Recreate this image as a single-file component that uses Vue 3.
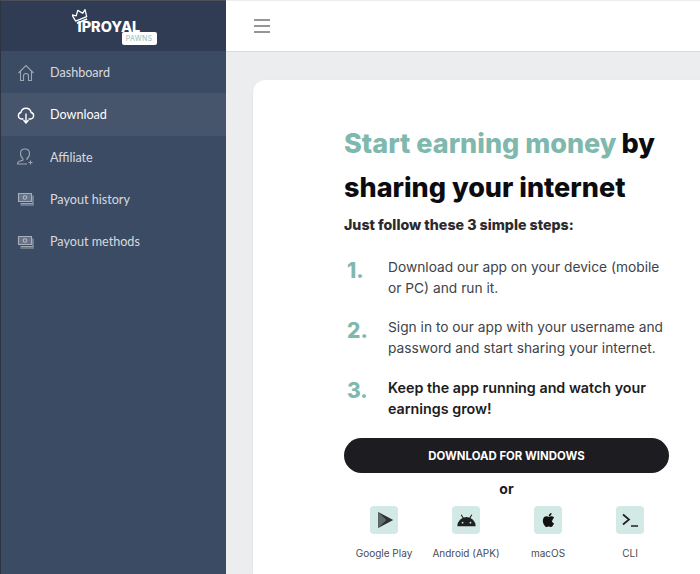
<script setup>
const menu = [
  { label: 'Dashboard', icon: 'home' },
  { label: 'Download', icon: 'cloud', active: true },
  { label: 'Affiliate', icon: 'user' },
  { label: 'Payout history', icon: 'cash' },
  { label: 'Payout methods', icon: 'cash' },
]
const steps = [
  { text: 'Download our app on your device (mobile or PC) and run it.' },
  { text: 'Sign in to our app with your username and password and start sharing your internet.' },
  { text: 'Keep the app running and watch your earnings grow!', bold: true },
]
const platforms = ['Google Play', 'Android (APK)', 'macOS', 'CLI']
</script>

<template>
  <div class="layout">
    <aside class="sidebar">
      <div class="brand">
        <div class="logo">
          <svg class="crown" viewBox="0 0 16 16" width="16" height="16">
            <g fill="none" stroke="#fff" stroke-width="1.3" stroke-linejoin="round" transform="rotate(-22 8 8)">
              <path d="M2 11L1 4l3.500 2.500L8 2l3.500 4.500L15 4l-1 7z" />
              <path d="M2.500 13.500h11" stroke-width="1.600" />
            </g>
          </svg>
          <span class="logo-text">IPROYAL</span>
          <span class="logo-tag">PAWNS</span>
        </div>
      </div>
      <nav class="nav">
        <a v-for="item in menu" :key="item.label" class="nav-item" :class="{ active: item.active }">
          <svg class="nav-icon" viewBox="0 0 18 18" width="18" height="18" fill="none" stroke="currentColor" stroke-width="1.100">
            <template v-if="item.icon === 'home'">
              <path d="M1.500 9L9 1.500 16.500 9" />
              <path d="M3.500 7.500V16.500H6.500V12a2.500 2.500 0 0 1 5 0v4.500h3V7.500" />
            </template>
            <template v-else-if="item.icon === 'cloud'">
              <path d="M6.500 13H4.500a3.300 3.300 0 0 1-.6-6.500 5.200 5.200 0 0 1 10.200 0 3.300 3.300 0 0 1-.6 6.500h-2" stroke-width="1.400" />
              <path d="M9 7.500v9M6.500 14L9 17l2.500-3" stroke-width="1.400" />
            </template>
            <template v-else-if="item.icon === 'user'">
              <path d="M6 10.500C4.300 9.500 3.500 7.500 3.500 5.500c0-2.700 2-4.500 4.500-4.500s4.500 1.800 4.500 4.500c0 2-.8 4-2.500 5v1.500" />
              <path d="M6 10.500V12L2 13.500c-1 .4-1.500 1-1.500 2.500H10" />
              <path d="M13.500 12.500v4M11.500 14.500h4" />
            </template>
            <template v-else>
              <path d="M1.500 3.500h13v8h-13z" fill="rgba(255,255,255,0.22)" />
              <circle cx="8" cy="7.500" r="1.800" />
              <path d="M3.500 13.500h12.500V5.500M3.500 15h13.500" />
            </template>
          </svg>
          <span>{{ item.label }}</span>
        </a>
      </nav>
    </aside>

    <div class="main">
      <header class="topbar">
        <button class="burger" aria-label="Menu"><i></i><i></i><i></i></button>
      </header>
      <div class="content">
        <section class="card">
          <div class="inner">
            <h1>
              <span class="h-line"><span class="accent">Start earning money</span><span class="by">by</span></span>
              <span class="h-line">sharing your internet</span>
            </h1>
            <p class="lead">Just follow these 3 simple steps:</p>
            <ol class="steps">
              <li v-for="(step, i) in steps" :key="i">
                <span class="num">{{ i + 1 }}.</span>
                <span class="step-text" :class="{ strong: step.bold }">{{ step.text }}</span>
              </li>
            </ol>
            <button class="download">DOWNLOAD FOR WINDOWS</button>
            <div class="or">or</div>
            <div class="platforms">
              <div v-for="(name, i) in platforms" :key="name" class="platform">
                <span class="tile">
                  <svg v-if="i === 0" viewBox="0 0 24 24" width="20" height="20">
                    <path d="M5 2.500L23 12 5 21.500z" fill="#2e3131" />
                    <path d="M5 2.500L15 12 5 21.500z" fill="#5f6b69" />
                  </svg>
                  <svg v-else-if="i === 1" viewBox="0 0 24 24" width="21" height="21">
                    <path d="M1.500 18.500a10.500 10.500 0 0 1 21 0z" fill="#1f2020" />
                    <path d="M6 5.500l3 5M18 5.500l-3 5" stroke="#1f2020" stroke-width="1.200" />
                    <circle cx="7.500" cy="14.500" r="1" fill="#d3e9e5" />
                    <circle cx="16.500" cy="14.500" r="1" fill="#d3e9e5" />
                  </svg>
                  <svg v-else-if="i === 2" viewBox="0 0 24 24" width="20" height="20">
                    <path d="M17.500 12.600c0-2.200 1.800-3.200 1.900-3.300-1-1.500-2.600-1.700-3.200-1.700-1.300-.1-2.600.8-3.300.8s-1.700-.8-2.800-.8C8.600 7.600 7.200 8.500 6.500 9.800c-1.500 2.600-.4 6.500 1.100 8.600.7 1 1.500 2.200 2.600 2.100 1-.04 1.400-.7 2.700-.7s1.600.7 2.700.6c1.100 0 1.800-1 2.500-2 .8-1.200 1.100-2.300 1.100-2.400-.02 0-2.700-1-2.700-3.400zM15.400 6.300c.6-.7 1-1.700.9-2.700-.8 0-1.900.6-2.500 1.300-.5.6-1 1.600-.9 2.600 1 .1 1.900-.5 2.500-1.200z" fill="#111" />
                  </svg>
                  <svg v-else viewBox="0 0 24 24" width="24" height="24" fill="none" stroke="#1f2020" stroke-width="1.700">
                    <path d="M5 6.500l6 5-6 5M13 18h7" />
                  </svg>
                </span>
                <span class="platform-name">{{ name }}</span>
              </div>
            </div>
          </div>
        </section>
      </div>
    </div>
  </div>
</template>

<style>
html, body { margin: 0; height: 100%; overflow: hidden; }
</style>

<style scoped>
.layout {
  display: flex;
  width: 700px;
  height: 574px;
  overflow: hidden;
  background: #ebedef;
  font-family: 'Inter', 'Liberation Sans', sans-serif;
}

.sidebar {
  width: 226px;
  flex: none;
  background: #3c4b64;
  border-top: 1px solid #4a4f58;
  border-left: 1px solid #2c3444;
  box-sizing: border-box;
  color: rgba(255, 255, 255, 0.8);
  font-family: 'Lato', sans-serif;
}

.brand {
  height: 50px;
  background: #303c54;
  display: flex;
  justify-content: center;
}

.logo {
  position: relative;
  width: 78px;
  height: 50px;
}
.crown { position: absolute; left: -3px; top: 7px; }
.logo-text {
  position: absolute;
  left: 3px;
  top: 16px;
  font-family: 'Inter', sans-serif;
  font-size: 14.500px;
  font-weight: 800;
  line-height: 20px;
  color: #fff;
}
.logo-tag {
  position: absolute;
  left: 47px;
  top: 31px;
  width: 35px;
  height: 13px;
  background: #fff;
  border-radius: 2px;
  font-family: 'Inter', sans-serif;
  font-size: 7px;
  line-height: 13px;
  text-align: center;
  letter-spacing: 0.3px;
  color: #8dbdb4;
}

.nav { display: flex; flex-direction: column; }

.nav-item {
  height: 42.250px;
  display: flex;
  align-items: center;
  gap: 15px;
  padding: 1px 0 0 16px;
  box-sizing: border-box;
  font-size: 12.600px;
  color: rgba(255, 255, 255, 0.8);
}
.nav-item.active {
  background: #46546c;
  color: #fff;
}
.nav-icon { flex: none; color: rgba(255, 255, 255, 0.5); }
.nav-item.active .nav-icon { color: #fff; }

.main { flex: 1; min-width: 0; display: flex; flex-direction: column; }

.topbar {
  height: 50px;
  margin-top: 1px;
  flex: none;
  background: #fff;
  border-bottom: 1px solid #d8dbe0;
  display: flex;
  align-items: center;
  padding-left: 28px;
}

.burger {
  display: flex;
  flex-direction: column;
  gap: 4px;
  background: none;
  border: none;
  padding: 0;
  width: 16px;
}
.burger i {
  display: block;
  height: 2px;
  background: #969696;
}

.content { flex: 1; padding: 28px 0 0 27px; min-height: 0; }

.card {
  height: 100%;
  margin-right: -40px;
  background: #fff;
  border-radius: 12px 0 0 0;
  box-shadow: 0 1px 3px rgba(0, 0, 0, 0.06);
  padding: 42px 0 0 91px;
  box-sizing: border-box;
}

.inner { width: 325px; }

h1 {
  margin: 0;
  font-size: 27px;
  font-weight: 800;
  line-height: 44px;
  color: #0c0c10;
}
.h-line { display: block; white-space: nowrap; }
.accent { color: #7fb8ad; }
.by { margin-left: 5px; }

.lead {
  margin: 5px 0 0;
  font-size: 14.200px;
  font-weight: 800;
  line-height: 20px;
  color: #2b2b2e;
}

.steps {
  list-style: none;
  margin: 22px 0 0;
  padding: 0;
  display: flex;
  flex-direction: column;
  gap: 18px;
}
.steps li { display: flex; }
.num {
  width: 44px;
  flex: none;
  padding: 2px 0 0 3px;
  box-sizing: border-box;
  font-size: 21px;
  font-weight: 800;
  line-height: 24px;
  color: #7fb8ad;
}
.step-text {
  font-size: 13.750px;
  line-height: 21px;
  color: #40444a;
}
.step-text.strong { font-size: 14.300px; font-weight: 600; color: #1c1c20; }

.download {
  display: block;
  width: 100%;
  height: 35px;
  margin-top: 19px;
  border: none;
  border-radius: 18px;
  background: #1d1d21;
  color: #fff;
  font-family: inherit;
  font-size: 11.400px;
  font-weight: 700;
  padding: 0;
}

.or {
  margin-top: 7px;
  text-align: center;
  font-size: 14px;
  font-weight: 700;
  line-height: 18px;
  color: #1c1c20;
}

.platforms {
  display: grid;
  grid-template-columns: repeat(4, 82px);
  margin-top: 8px;
  margin-left: -1px;
}
.platform {
  display: flex;
  flex-direction: column;
  align-items: center;
  gap: 12px;
}
.tile {
  width: 28px;
  height: 28px;
  border-radius: 4px;
  background: #d3e9e5;
  display: flex;
  align-items: center;
  justify-content: center;
}
.platform-name {
  font-size: 10px;
  line-height: 14px;
  color: #4a4d52;
  white-space: nowrap;
}
</style>
